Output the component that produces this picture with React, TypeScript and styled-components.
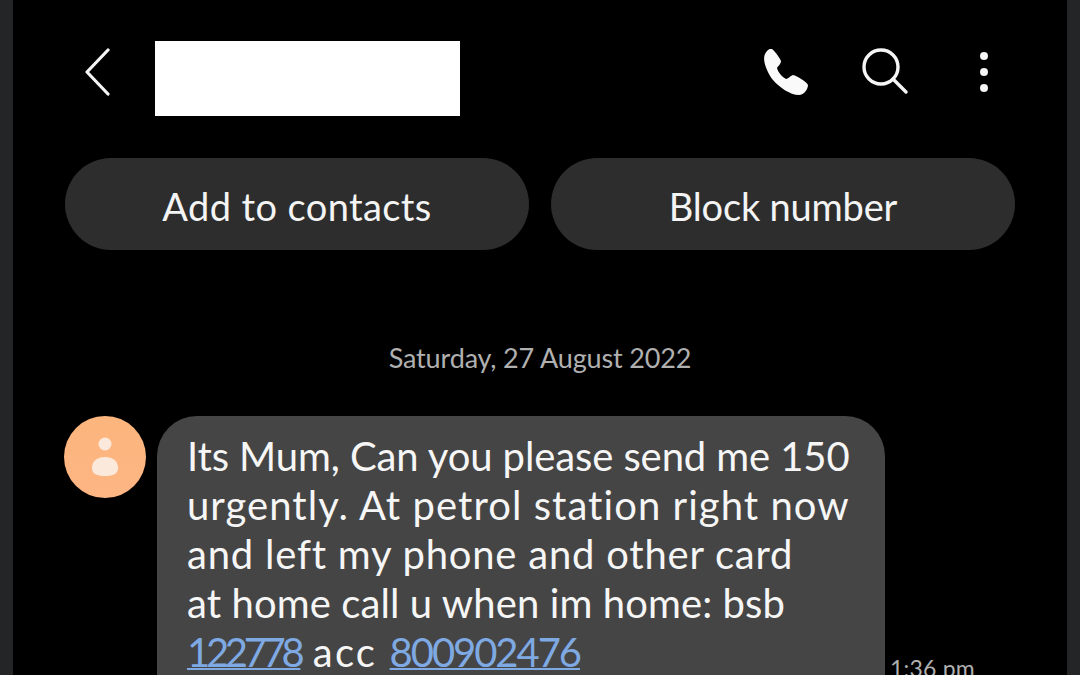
import React from "react";
import styled, { createGlobalStyle } from "styled-components";

const Global = createGlobalStyle`
  html, body { margin: 0; padding: 0; background: #000; }
  body { width: 1080px; height: 675px; overflow: hidden; font-family: "Lato", "Noto Sans", sans-serif; }
`;

const Frame = styled.div`
  width: 1080px;
  height: 675px;
  overflow: hidden;
  display: flex;
  background: #000;
`;

const SideBar = styled.div`
  flex: 0 0 13px;
  background: #242526;
`;

const Screen = styled.main`
  flex: 1;
  min-width: 0;
  padding: 41px 52px 0;
  display: flex;
  flex-direction: column;
`;

const Header = styled.header`
  height: 75px;
  display: flex;
  align-items: flex-start;
`;

const BackIcon = styled.svg`
  width: 30px;
  height: 52px;
  margin: 3px 0 0 17px;
`;

const Redaction = styled.div`
  width: 305px;
  height: 75px;
  margin-left: 43px;
  background: #fff;
`;

const HeaderIcons = styled.div`
  margin-left: auto;
  display: flex;
  align-items: flex-start;
`;

const PhoneIcon = styled.svg`
  width: 46px;
  height: 46px;
  margin-top: 8px;
`;

const SearchIcon = styled.svg`
  width: 48px;
  height: 48px;
  margin: 6px 0 0 53px;
`;

const DotsIcon = styled.svg`
  width: 12px;
  height: 44px;
  margin: 9px 25px 0 69px;
`;

const Actions = styled.div`
  display: flex;
  gap: 22px;
  margin-top: 42px;
`;

const Pill = styled.button<{ $spacing: number }>`
  flex: 1;
  height: 92px;
  padding: 4px 0 0;
  border: 0;
  border-radius: 46px;
  background: #2d2d2d;
  color: #f4f4f4;
  font-family: inherit;
  font-size: 38px;
  font-weight: 400;
  letter-spacing: ${(p) => p.$spacing}px;
`;

const DateLabel = styled.div`
  margin-top: 91px;
  height: 34px;
  line-height: 34px;
  text-align: center;
  color: #b0b0b0;
  font-size: 27px;
  font-weight: 400;
  letter-spacing: -0.15px;
`;

const MessageRow = styled.div`
  display: flex;
  align-items: flex-start;
  margin-top: 41px;
  margin-left: -1px;
`;

const Avatar = styled.div`
  flex: 0 0 82px;
  height: 82px;
  border-radius: 50%;
  background: linear-gradient(#fcb57c, #fdb684);
  display: flex;
  align-items: center;
  justify-content: center;
`;

const AvatarIcon = styled.svg`
  width: 28px;
  height: 40px;
`;

const Bubble = styled.div`
  flex: 0 0 728px;
  height: 300px;
  box-sizing: border-box;
  margin-left: 11px;
  padding: 16px 0 0 30px;
  border-radius: 40px;
  background: #454545;
  color: #f6f6f6;
  font-size: 40px;
  font-weight: 400;
  line-height: 49px;
  white-space: nowrap;
`;

const Line = styled.div<{ $spacing: number }>`
  letter-spacing: ${(p) => p.$spacing}px;
`;

const NumberLink = styled.a<{ $spacing: number }>`
  color: #7fa9e3;
  text-decoration: underline;
  text-decoration-thickness: 2px;
  letter-spacing: ${(p) => p.$spacing}px;
`;

const Time = styled.div`
  margin: 238px 0 0 5px;
  color: #b0b0b0;
  font-size: 23px;
  font-weight: 400;
  letter-spacing: 0.2px;
  white-space: nowrap;
`;

export default function App() {
  return (
    <Frame>
      <Global />
      <SideBar />
      <Screen>
        <Header>
          <BackIcon viewBox="0 0 30 52" fill="none" stroke="#f5f5f5" strokeWidth="3.2" strokeLinecap="round" strokeLinejoin="round">
            <path d="M26 6 L5 28 L26 50" />
          </BackIcon>
          <Redaction />
          <HeaderIcons>
            <PhoneIcon viewBox="0 0 46 46" fill="#fafafa">
              <path d="M3 5 C5 1 8 -1 10 0 C12 1 18 9 19 12 C19 15 16 17 15 19 C16 23 20 28 24 30 C26 30 28 27 31 26 C35 27 45 33 46 36 C46 40 42 46 37 46 C28 46 17 38 11 31 C5 23 0 11 3 5 Z" />
            </PhoneIcon>
            <SearchIcon viewBox="0 0 48 48" fill="none" stroke="#f5f5f5" strokeWidth="3.4" strokeLinecap="round">
              <circle cx="20" cy="20" r="17" />
              <path d="M32 32 L45 45" />
            </SearchIcon>
            <DotsIcon viewBox="0 0 12 44" fill="#f5f5f5">
              <circle cx="6" cy="6" r="4" />
              <circle cx="6" cy="22" r="4" />
              <circle cx="6" cy="38" r="4" />
            </DotsIcon>
          </HeaderIcons>
        </Header>
        <Actions>
          <Pill $spacing={0.4}>Add to contacts</Pill>
          <Pill $spacing={-0.2}>Block number</Pill>
        </Actions>
        <DateLabel>Saturday, 27 August 2022</DateLabel>
        <MessageRow>
          <Avatar>
            <AvatarIcon viewBox="0 0 28 40" fill="#fbe9dc">
              <circle cx="14" cy="7" r="6.5" />
              <path d="M14 20 C23 20 27 25 27 31 C27 37 22 39 14 39 C6 39 1 37 1 31 C1 25 5 20 14 20 Z" />
            </AvatarIcon>
          </Avatar>
          <Bubble>
            <Line $spacing={-0.1}>Its Mum, Can you please send me 150</Line>
            <Line $spacing={1.05}>urgently. At petrol station right now</Line>
            <Line $spacing={0.78}>and left my phone and other card</Line>
            <Line $spacing={0.1}>at home call u when im home: bsb</Line>
            <Line $spacing={2.2}>
              <NumberLink $spacing={-4.3}>122778</NumberLink> acc <NumberLink $spacing={-2.05}>800902476</NumberLink>
            </Line>
          </Bubble>
          <Time>1:36 pm</Time>
        </MessageRow>
      </Screen>
      <SideBar />
    </Frame>
  );
}
